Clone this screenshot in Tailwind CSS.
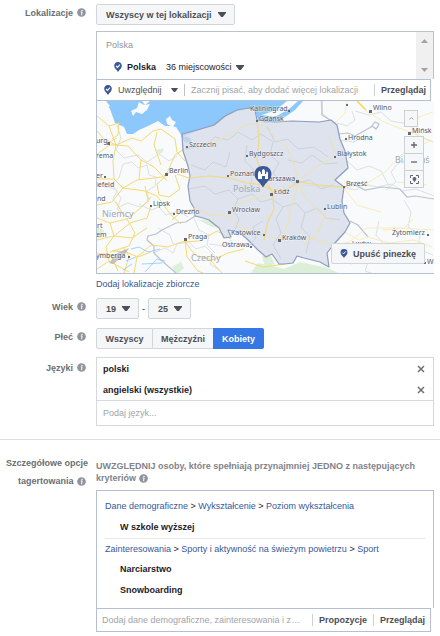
<!DOCTYPE html>
<html lang="pl">
<head>
  <meta charset="UTF-8">
  <title>Grupa odbiorców</title>
  <meta name="viewport" content="width=device-width, initial-scale=1.0">
  <script src="https://cdn.jsdelivr.net/npm/@tailwindcss/browser@4"></script>
</head>
<body class="bg-white font-['Liberation_Sans',Arial,sans-serif] text-[9px] leading-3 text-[#1d2129]">

  <!-- Shared icons -->
  <svg class="hidden">
    <symbol id="info" viewBox="0 0 10 10">
      <circle cx="5" cy="5" r="4.8" fill="#90949c"/>
      <circle cx="5.6" cy="2.7" r=".8" fill="#fff"/>
      <path d="M4.2 4.4h1.5L5 7.6h.8" fill="none" stroke="#fff" stroke-width="1.1"/>
    </symbol>
    <symbol id="caret" viewBox="0 0 8 5">
      <path d="M0 0h8v1L4.8 5H3.2L0 1z" fill="#4b4f56"/>
    </symbol>
    <symbol id="pin" viewBox="0 0 8 10">
      <path d="M4 0a3.7 3.7 0 0 1 3.8 3.8C7.8 6.5 5.5 7.5 4 10 2.500 7.5.2 6.5.2 3.8A3.7 3.7 0 0 1 4 0z" fill="#3b5998"/>
      <path d="M2.1 4l1.400 1.4L6 2.700" fill="none" stroke="#fff" stroke-width="1.1"/>
    </symbol>
    <symbol id="close" viewBox="0 0 8 8">
      <path d="M1 1l6 6M7 1L1 7" fill="none" stroke="#6b7079" stroke-width="1.5"/>
    </symbol>
  </svg>

  <main class="pt-1">
    <!-- Location -->
    <section class="flex gap-2 pr-[6px]">
      <div class="flex w-[88px] shrink-0 items-start justify-end gap-1 pt-[3px] pr-[2px]">
        <label for="scope" class="font-bold text-[#6a6e75]">Lokalizacje</label>
        <svg class="mt-px size-[9px]"><use href="#info"/></svg>
      </div>
      <div class="min-w-0 grow">
        <div class="relative inline-block align-top">
          <select id="scope" class="block h-[21px] appearance-none rounded-xs border border-[#d2d5da] bg-[#f5f6f7] pr-[22px] pl-[9px] font-bold text-[#4b4f56]">
            <option>Wszyscy w tej lokalizacji</option>
          </select>
          <svg class="pointer-events-none absolute top-2 right-[9px] h-[5px] w-2"><use href="#caret"/></svg>
        </div>

        <div class="mt-[6px] flex h-12 border border-b-0 border-[#bdc3cc]">
          <div class="grow pt-[7px] pl-[9px]">
            <div class="text-[#90949c]">Polska</div>
            <div class="mt-[10px] flex items-center pl-2">
              <svg class="mr-[5px] h-[10px] w-2"><use href="#pin"/></svg>
              <span class="font-bold">Polska</span>
              <button class="ml-[10px] flex items-center gap-1">36 miejscowości <svg class="h-[5px] w-2"><use href="#caret"/></svg></button>
            </div>
          </div>
          <div class="flex w-[17px] flex-col items-center justify-between bg-[#f0f0f0] py-[7px]">
            <svg class="h-1 w-[7px]" viewBox="0 0 7 4"><path d="M3.5 0L7 4H0z" fill="#a3a3a3"/></svg>
            <svg class="h-1 w-[7px]" viewBox="0 0 7 4"><path d="M3.5 4L7 0H0z" fill="#a3a3a3"/></svg>
          </div>
        </div>

        <div class="mr-[3px] flex h-[22px] items-center border border-[#b4bfd2] px-[7px]">
          <svg class="mr-[6px] h-[10px] w-2"><use href="#pin"/></svg>
          <div class="relative border-r border-[#bdc3cc]">
            <select aria-label="Uwzględnij lub wyklucz" class="block appearance-none pr-[22px] text-[#4b4f56]">
              <option>Uwzględnij</option>
            </select>
            <svg class="pointer-events-none absolute top-1 right-[6px] h-1 w-[7px]"><use href="#caret"/></svg>
          </div>
          <input type="text" aria-label="Dodaj lokalizację" placeholder="Zacznij pisać, aby dodać więcej lokalizacji" class="ml-[6px] min-w-0 grow placeholder:text-[#a0a4aa]">
          <button class="-mr-[3px] border-l border-[#ccd0d5] pl-[6px] font-bold text-[#4b4f56]">Przeglądaj</button>
        </div>

        <!-- Map -->
        <div class="relative h-[173px] overflow-hidden border-b border-l border-[#b4bfd2] bg-[#f8fafc]">
          <svg class="block h-full w-full" viewBox="0 0 337 172" preserveAspectRatio="xMinYMin slice" fill="none">
            <!-- sea -->
            <path d="M8 0L13 8 18 22 27 26 30 33 36 33 42 29 51 25 61 20 68 25 74 25 79 26 83 32 85 36 100 30 117 25 128 16 140 10 152 7 158 9 161 19 167 22 178 21 185 18 198 9 206 0z" fill="#8cc8fc"/>
            <path d="M34 10l6-3 2-6 5 3 6-1-3 6-5 4-6-2-3 4zM0 0h9l4 5-6 3zM45 0h8l-5 4zM69 18l4-3 2 4 4 2-3 5-6-3zM165 14l14-5 11-9h11l-9 8-14 8z" fill="#f8fafc"/>
            <path d="M84 35l8 1 3 4-6 2-3-3z" fill="#8cc8fc"/>
            <g fill="#dcefd8">
              <path d="M60 49l7-2-2 5-5 1zM100 118l14 2 9 7-8-1zM0 126l7 3-3 9-4-2zM75 166l9-5 3 6-7 6zM161 162l15 3 11 3 16-7 28 6 12 6h-90zM165 155l9 0 4 8-10 3z"/>
            </g>
            <!-- minor borders and rivers -->
            <g stroke="#dde1e4" stroke-width="1">
              <path d="M26 63l9-2 6 6 9-3 2 10 7 2-1 9-8 5 2 10-9 6-12-4-9 4-6-8 4-8-6-7 8-6zM20 24l4 13-5 12 8 8 14-3 9 7 12-8 10 7 8-5M0 84l18 4 6 9-4 11 9 8M42 103l12 6 8-3 7 8 12-4 10 6M20 37l-9 5-11-2"/>
              <path d="M56 152l12-5 8 5 4-9 12-2 7 7 9-3 8 8-3 10 9 6M97 117l5 12 10 5-2 10 8 8M61 127l12 7 3 9M112 143l15 2 8-6"/>
              <path d="M240 22l10 3 8-6-3-9M243 39l13 2 12-5M250 60l10 9 12-4 12 5 9 17M258 10l14 4 12-3 10 9 18 3 9 12 15 6M244 86l15 3 8-6 13 3 15-3 10 7 14-2 18 7M282 120l-3 14 7 8-3 10 9 9M303 60l-9 11 5 10-10 8M307 99l7 12-3 15 12 8-2 14 15 6M260 152l12 6-4 12 9 3M224 0l1 12 7 6"/>
            </g>
            <g stroke="#bcc2cf" stroke-width="1.200">
              <path d="M242 33l9-1 7 3 9-5 7-4 4-5 4 2-3 5-4-3M225 0v14l8 5M247 86l9-3 12 6 17-3 18 2 7 8 8-1 19 3"/>
              <path d="M98 115l-9 6-10 1-14 7-6 4-8 2-1 4 7 6 0 7 7 7 8 7 7 6M253 120l8 4 10 12M235 145l10 6 10 12"/>
            </g>
            <!-- roads -->
            <g stroke="#f5da70" stroke-width="1">
              <path d="M0 15l12 10 7 19 12 1 13 14 13 7 7 7 6 7M19 44l16-7 9 3 12-10 8-2 14 10 2 13 8 9M0 53l13-9 6 0M12 25l10-3-1 12-6 4M19 44l-3 16 1 18 9 9 14-8 25-3 7-4M0 78l16 0M70 74l-10 9 2 11 10 2 11-8-5-14M80 73l12 4"/>
              <path d="M70 72l8-18 9-6M44 59l-2 19M64 64l-7-20 3-13M0 104l15-3 11-14 22 3 12 5 14 19 10 9M0 117l13 5 17-4 16-13 8-9M54 105l-4 12-17 5-16 13-17 4M13 122l4 13-8 11 3 14 20 11M30 118l8 14-6 13-19 6M88 139l2 17 11 14 7 3"/>
              <path d="M84 141l-13 5-17-2-14 12-3 16M84 141l18-1 18-10 14 8M89 142l9 12 18 5 15-7 16-4M113 159l13 14M12 160l-12 8M15 150l14 1 12 5 13-5M17 135l18 2 15-10M98 108l-14 3-9 8M0 152l14 2 7 16M0 30l7 8 12 6M19 101l8 14M48 85l3 14M26 146l6 9-5 18M148 160l18 6 22-3"/>
            </g>
            <g stroke="#f8edb8" stroke-width="1">
              <path d="M269 10l18 11 28 11 20 8M335 39l-30 14-17 18-19 12-22 4-42-3M250 0l-2 12-12 12M314 32l8-16 14-5M247 87l13 17 24 7M232 145l20-4 18-14 30 0 36 2M244 129l18 10 9-3 21 6 25-3 18 7M316 118l-9 9-21 2M300 81l30 3"/>
            </g>
            <path d="M260 0l9 9" stroke="#f5da45" stroke-width="1.500"/>
            <!-- selected country -->
            <path d="M85 33L100 29 117 24 128 15 140 9 152 7 158 9 160 19 178 21 195 20 222 21 234 19 240 24 243 38 248 50 251 67 238 79 247 86 245 100 247 112 253 122 248 131 237 143 230 152 232 166 223 161 207 157 200 155 196 162 187 163 182 163 175 153 169 156 161 149 156 144 150 138 144 133 137 130 131 129 134 136 127 137 122 127 112 119 106 117 98 115 97 107 93 100 91 85 93 75 91 65 86 50z" fill="#d4dae8" fill-opacity=".72" stroke="#8e9cbd" stroke-width="1.200" stroke-linejoin="round"/>
            <g stroke="#ccd2dc" stroke-width="1">
              <path d="M88 48l20-3 10-9 13 3 10-8 14 8 9-6 12 8-3 13 9 8-6 10 8 9M94 64l14 5 8-8 13 5 4-15M92 88l16-3 10 8 14-4 9 9-5 12 6 8-5 14M141 98l14-5 9 8 11-3 11 8-7 12 5 14-8 12 8 14M170 25l8 16 13-3 10 10 16-2 14 10M191 59l14 3 10-8 13 9 12-1M185 78l14 4 14-3 11 9 12-4M186 106l13-4 9 10 12-5 9 10 14 2M208 112l-4 14 9 10-4 16M150 44l-2 16 9 9-4 16M166 120l-10 6 3 11-8 9"/>
            </g>
            <g stroke="#efe3ab" stroke-width="1">
              <path d="M92 46l22-4 18-8 15-9 13-3M160 20l14 12 17 16 7 19 3 14M96 107l18 7 16 1 12-12 16-6 16-3M131 114l12 13 14 3 14 5 14 4 18-4 30 7M201 81l16-14 22-12M201 81l8 17 14 13 14 12M201 83l-6 21-4 18-7 16M229 111l-8 20-14 14M239 54l-7-18"/>
            </g>
            <path d="M92 77l20-2 20 2 18 5 16 2 10 6 14-2 12-7 20 3 24 2M160 20l2 18-2 21 7 19 8 12 2 18-6 12-4 19" stroke="#f0db81" stroke-width="1.200"/>
            <g stroke="#8cc8fc" stroke-width=".8">
              <path d="M34 148l8-2 9 5 12-3M29 160l10-4M48 171l12-13 8 2M45 163l20-1M26 169l9-6"/>
            </g>
            <path d="M12 162l8-10 12-5-5 8-11 8z" fill="#8f9499" fill-opacity=".5"/>

            <!-- place marks -->
            <g fill="#62687a">
              <path d="M10 41h3v3h-3zM68 72h3v3h-3zM7 75h2v2H7zM89 45h2v2h-2zM191 9h2v2h-2zM159 19h2v2h-2zM149 54h2v2h-2zM130 74h2v2h-2zM199 79h3v3h-3zM173 92h3v3h-3zM53 104h2v2h-2zM76 112h2v2h-2zM131 110h3v3h-3zM87 137h3v3h-3zM31 155h2v2h-2zM153 145h2v2h-2zM166 133h2v2h-2zM181 138h3v3h-3zM227 107h2v2h-2zM272 9h3v3h-3zM249 3h2v2h-2zM248 37h2v2h-2zM237 55h2v2h-2zM246 85h2v2h-2zM311 31h3v3h-3zM330 133h2v2h-2zM327 161h2v2h-2z"/>
            </g>
            <g font-family="'Noto Sans', sans-serif" font-size="7" fill="#50576a" stroke="#fff" stroke-opacity=".6" stroke-width="1" paint-order="stroke">
              <text x="-1" y="42">urg</text><text x="-1" y="57">rema</text><text x="-1" y="77">er</text><text x="-1" y="86">lefeld</text>
              <text x="0" y="100">nd</text><text x="0" y="127">rt</text><text x="-1" y="136">em</text><text x="-1" y="157">ymberga</text>
              <text x="92" y="46">Szczecin</text><text x="72" y="72">Berlin</text><text x="153" y="10">Kaliningrad</text><text x="162" y="20">Gdańsk</text>
              <text x="152" y="55">Bydgoszcz</text><text x="133" y="75">Poznań</text><text x="165" y="80">Warszawa</text><text x="177" y="93">Łódź</text>
              <text x="56" y="105">Lipsk</text><text x="79" y="113">Drezno</text><text x="135" y="111">Wrocław</text><text x="91" y="138">Praga</text>
              <text x="134" y="134">Katowice</text><text x="125" y="146">Ostrawa</text><text x="185" y="139">Kraków</text><text x="230" y="108">Lublin</text>
              <text x="276" y="9">Wilno</text><text x="251" y="39">Hrodna</text><text x="240" y="55">Białystok</text><text x="249" y="85">Brześć</text>
              <text x="315" y="32">Mińsk</text><text x="295" y="134">Żytomierz</text><text x="255" y="145">Lwów</text><text x="330" y="163">W</text>
            </g>
            <g font-family="'Noto Sans', sans-serif" font-size="9" fill="#a2a9b8">
              <text x="136" y="91">Polska</text><text x="5" y="116">Niemcy</text><text x="94" y="160">Czechy</text><text x="298" y="62">Białoruś</text>
            </g>

            <!-- marker -->
            <path d="M166 65c5 0 8.5 3.5 8.5 8.2 0 5.3-5 7-8.500 13.300-3.500-6.300-8.500-8-8.500-13.300 0-4.700 3.500-8.200 8.500-8.200z" fill="#3b5998"/>
            <path d="M161 78v-6l1-2h1l1 2v1h1v-4l2-1 1 2v3h1v-1l1-2 1 2v6h-3v-3h-3v3z" fill="#fff"/>
          </svg>

          <div class="absolute top-[9px] right-[10px] flex w-[20px] flex-col text-[#60656f]">
            <button aria-label="Zwiń" class="mb-[9px] flex h-[17px] w-[14px] items-center justify-center border border-[#ccd0d5] bg-[#f6f7f9]">
              <svg class="h-[3px] w-[5px]" viewBox="0 0 5 3"><path d="M.5 2.5l2-2 2 2" fill="none" stroke="#a0a4aa"/></svg>
            </button>
            <button aria-label="Powiększ" class="flex h-[18px] items-center justify-center border border-[#ccd0d5] bg-[#f6f7f9]">
              <svg class="size-[6px]" viewBox="0 0 6 6"><path d="M3 0v6M0 3h6" stroke="currentColor" stroke-width="1.3"/></svg>
            </button>
            <button aria-label="Pomniejsz" class="-mt-px flex h-[18px] items-center justify-center border border-[#ccd0d5] bg-[#f6f7f9]">
              <svg class="size-[6px]" viewBox="0 0 6 6"><path d="M0 3h6" stroke="currentColor" stroke-width="1.3"/></svg>
            </button>
            <button aria-label="Wyśrodkuj" class="-mt-px flex h-[18px] items-center justify-center border border-[#ccd0d5] bg-[#f6f7f9]">
              <svg class="size-[9px]" viewBox="0 0 9 9"><path d="M.5 3V.5H3M6 .5h2.500V3M8.500 6v2.500H6M3 8.500H.5V6" fill="none" stroke="currentColor"/><path d="M4.500 2c1.200 0 1.900.9 1.900 1.900C6.400 5.200 5.200 5.500 4.500 7.200 3.800 5.500 2.600 5.200 2.600 3.900c0-1 .7-1.900 1.900-1.900z" fill="currentColor"/></svg>
            </button>
          </div>
          <button class="absolute right-[9px] bottom-[9px] flex h-[21px] items-center gap-[5px] rounded-xs border border-[#d2d5da] bg-[#f5f6f7] px-[8px] font-bold text-[#4b4f56]">
            <svg class="h-[9px] w-2"><use href="#pin"/></svg>Upuść pinezkę
          </button>
        </div>
        <a href="#" class="mt-1 block text-[#365899]">Dodaj lokalizacje zbiorcze</a>
      </div>
    </section>

    <!-- Age -->
    <section class="mt-2 flex gap-2">
      <div class="flex w-[88px] shrink-0 items-start justify-end gap-1 pt-[3px] pr-[2px]">
        <label for="age-min" class="font-bold text-[#6a6e75]">Wiek</label>
        <svg class="mt-px size-[9px]"><use href="#info"/></svg>
      </div>
      <div class="flex items-center gap-[3px]">
        <div class="relative">
          <select id="age-min" class="block h-[21px] w-[43px] appearance-none rounded-xs border border-[#d2d5da] bg-[#f5f6f7] pl-[9px] font-bold text-[#4b4f56]"><option>19</option></select>
          <svg class="pointer-events-none absolute top-2 right-[9px] h-[5px] w-2"><use href="#caret"/></svg>
        </div>
        <span>-</span>
        <div class="relative">
          <select aria-label="Wiek do" class="block h-[21px] w-[43px] appearance-none rounded-xs border border-[#d2d5da] bg-[#f5f6f7] pl-[9px] font-bold text-[#4b4f56]"><option>25</option></select>
          <svg class="pointer-events-none absolute top-2 right-[9px] h-[5px] w-2"><use href="#caret"/></svg>
        </div>
      </div>
    </section>

    <!-- Gender -->
    <section class="mt-[9px] flex gap-2">
      <div class="flex w-[88px] shrink-0 items-start justify-end gap-1 pt-[3px] pr-[2px]">
        <span id="gender" class="font-bold text-[#6a6e75]">Płeć</span>
        <svg class="mt-px size-[9px]"><use href="#info"/></svg>
      </div>
      <div role="group" aria-labelledby="gender" class="flex h-[21px] font-bold text-[#4b4f56]">
        <button class="w-[57px] rounded-l-xs border border-[#d2d5da] bg-[#f5f6f7]">Wszyscy</button>
        <button class="w-[60px] border-y border-[#d2d5da] bg-[#f5f6f7]">Mężczyźni</button>
        <button aria-pressed="true" class="w-[51px] rounded-r-xs bg-[#3578e5] text-white">Kobiety</button>
      </div>
    </section>

    <!-- Languages -->
    <section class="mt-2 flex gap-2 pr-[6px]">
      <div class="flex w-[88px] shrink-0 items-start justify-end gap-1 pt-[5px] pr-[2px]">
        <label for="language" class="font-bold text-[#6a6e75]">Języki</label>
        <svg class="mt-px size-[9px]"><use href="#info"/></svg>
      </div>
      <div class="grow border border-[#d5d8dc]">
        <ul class="px-[6px] font-bold">
          <li class="flex h-[21px] items-center justify-between pr-[2px]">polski <button aria-label="Usuń polski"><svg class="size-2"><use href="#close"/></svg></button></li>
          <li class="flex h-[21px] items-center justify-between pr-[2px]">angielski (wszystkie) <button aria-label="Usuń angielski"><svg class="size-2"><use href="#close"/></svg></button></li>
        </ul>
        <input id="language" type="text" placeholder="Podaj język..." class="block h-[25px] w-full border-t border-[#d5d8dc] px-[6px] placeholder:text-[#a0a4aa]">
      </div>
    </section>

    <hr class="mt-[13px] border-[#dadde1]">

    <!-- Detailed targeting -->
    <section class="mt-5 flex gap-2 pr-[6px]">
      <div class="-mt-[6px] w-[88px] shrink-0 text-right leading-[18px] text-[#6a6e75]">
        <label for="targeting" class="font-bold">Szczegółowe opcje<br>tagertowania</label>
        <svg class="mr-[2px] ml-px inline size-[9px] align-middle"><use href="#info"/></svg>
      </div>
      <div class="min-w-0 grow">
        <p class="font-bold text-[#7f838a]">UWZGLĘDNIJ osoby, które spełniają przynajmniej JEDNO z następujących kryteriów <svg class="inline size-[9px] align-middle"><use href="#info"/></svg></p>
        <div class="mt-[6px] border border-b-0 border-[#b4bfd2] px-2 pt-[5px] pb-[7px]">
          <p class="leading-[21px]"><a href="#" class="text-[#365899]">Dane demograficzne</a> &gt; <a href="#" class="text-[#365899]">Wykształcenie</a> &gt; <a href="#" class="text-[#365899]">Poziom wykształcenia</a></p>
          <p class="border-b border-[#e5e7ea] pl-[15px] leading-[21px] font-bold">W szkole wyższej</p>
          <p class="leading-[20px]"><a href="#" class="text-[#365899]">Zainteresowania</a> &gt; <a href="#" class="text-[#365899]">Sporty i aktywność na świeżym powietrzu</a> &gt; <a href="#" class="text-[#365899]">Sport</a></p>
          <p class="pl-[15px] leading-[21px] font-bold">Narciarstwo</p>
          <p class="pl-[15px] leading-[21px] font-bold">Snowboarding</p>
        </div>
        <div class="mr-[3px] flex h-6 items-center border border-[#b4bfd2] px-[5px]">
          <input id="targeting" type="text" placeholder="Dodaj dane demograficzne, zainteresowania i zachowania" class="min-w-0 grow text-ellipsis placeholder:text-[#a0a4aa]">
          <button class="ml-2 border-l border-[#ccd0d5] px-[6px] font-bold text-[#4b4f56]">Propozycje</button>
          <button class="border-l border-[#ccd0d5] pl-[6px] font-bold text-[#4b4f56]">Przeglądaj</button>
        </div>
      </div>
    </section>
  </main>
</body>
</html>
